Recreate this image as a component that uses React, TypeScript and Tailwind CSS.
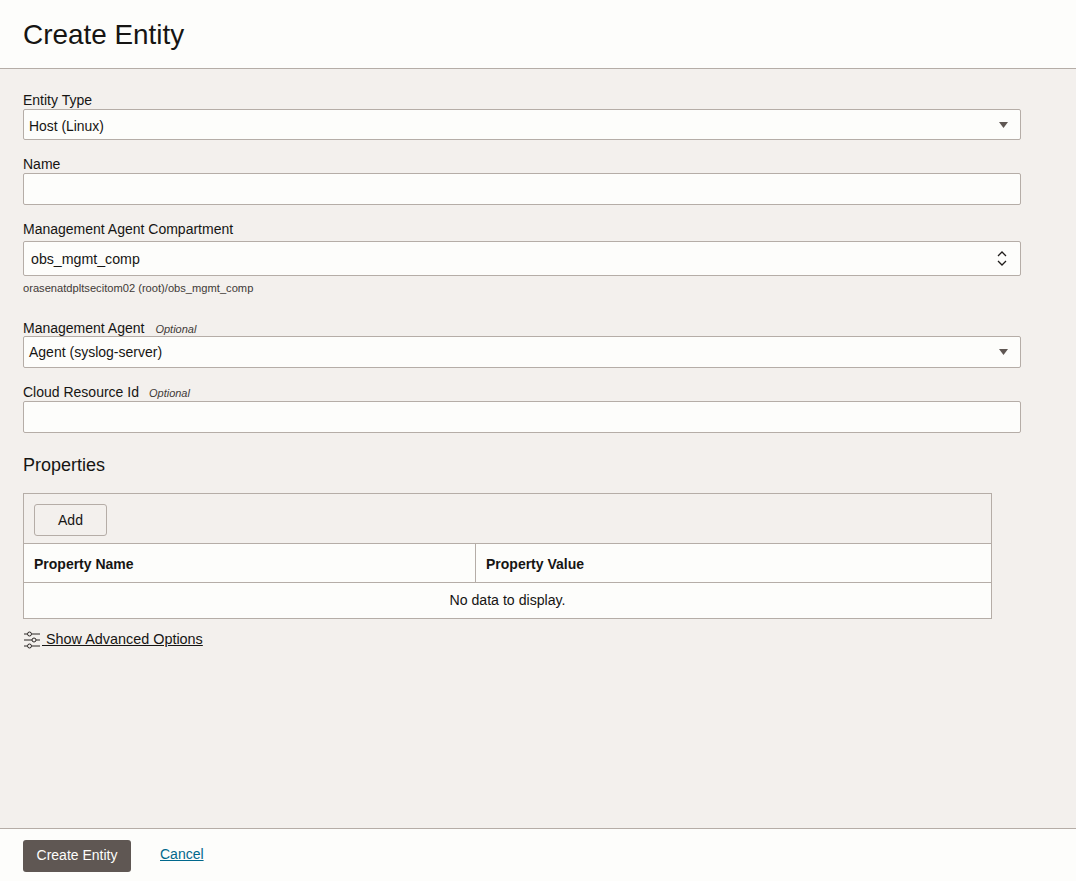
const ChevronDown = () => (
  <svg width="9" height="6" viewBox="0 0 9 6" className="shrink-0">
    <path d="M0 0h9L4.5 6z" fill="#5f5753" />
  </svg>
);

const UpDown = () => (
  <svg width="12" height="17" viewBox="0 0 12 17" fill="none" stroke="#1f1c1a" strokeWidth="1.3" className="shrink-0">
    <path d="M2 6l4-4 4 4" />
    <path d="M2 11l4 4 4-4" />
  </svg>
);

const SlidersIcon = () => (
  <svg width="18" height="18" viewBox="0 0 18 18" fill="none" stroke="#2b2725" strokeWidth="1" className="mr-[1px] shrink-0">
    <path d="M1 3h3M9 3h8M1 9h8M13 9h4M1 15h3M9 15h8" />
    <circle cx="6.5" cy="3" r="2" />
    <circle cx="11" cy="9" r="2" />
    <circle cx="6.5" cy="15" r="2" />
  </svg>
);

const App = () => {
  return (
    <div className="flex h-[881px] w-[1076px] flex-col overflow-hidden bg-[#f3f0ed] font-['Liberation_Sans',Arial,sans-serif] text-[14px] text-[#161513]">
      <header className="h-[69px] shrink-0 border-b border-[#b5ada7] bg-[#fdfdfb] pl-[23px] pt-[17px]">
        <h1 className="text-[27.9px] leading-[36px]">Create Entity</h1>
      </header>

      <main className="flex-1 px-[23px] pt-[23px]">
        <div className="w-[998px]">
          <label className="block h-[17px] leading-[17px]">Entity Type</label>
          <div className="flex h-[31px] items-center justify-between rounded-[2px] border border-[#b5ada7] bg-[#fdfdfb] pl-[5px] pr-[12px]">
            <span className="pt-[3px] text-[13.9px]">Host (Linux)</span>
            <ChevronDown />
          </div>

          <label className="mt-[16px] block h-[17px] leading-[17px]">Name</label>
          <input className="block h-[32px] w-full rounded-[2px] border border-[#b5ada7] bg-[#fdfdfb]" />

          <label className="mt-[16px] block h-[20px] leading-[17px]">Management Agent Compartment</label>
          <div className="flex h-[35px] items-center justify-between rounded-[2px] border border-[#b5ada7] bg-[#fdfdfb] pl-[7px] pr-[12px]">
            <span className="pt-[2px] text-[14.2px]">obs_mgmt_comp</span>
            <UpDown />
          </div>
          <p className="mt-[6px] h-[13px] text-[11.15px] leading-[13px] text-[#3f3a37]">orasenatdpltsecitom02 (root)/obs_mgmt_comp</p>

          <label className="mt-[25px] block h-[16px] leading-[16px]">
            Management Agent
            <span className="ml-[11px] text-[11px] italic text-[#3f3a37]">Optional</span>
          </label>
          <div className="flex h-[32px] items-center justify-between rounded-[2px] border border-[#b5ada7] bg-[#fdfdfb] pl-[5px] pr-[12px]">
            <span>Agent (syslog-server)</span>
            <ChevronDown />
          </div>

          <label className="mt-[16px] block h-[17px] leading-[17px]">
            Cloud Resource Id
            <span className="ml-[10px] text-[11px] italic text-[#3f3a37]">Optional</span>
          </label>
          <input className="block h-[32px] w-full rounded-[2px] border border-[#b5ada7] bg-[#fdfdfb]" />
        </div>

        <h2 className="mt-[21px] h-[22px] text-[18px] leading-[22px]">Properties</h2>

        <div className="mt-[17px] w-[969px] border border-[#b5ada7]">
          <div className="h-[50px] border-b border-[#b5ada7] pl-[10px] pt-[10px]">
            <button className="h-[32px] w-[73px] rounded-[3px] border border-[#b5ada7] text-[#161513]">Add</button>
          </div>
          <div className="flex h-[39px] border-b border-[#b5ada7] bg-[#fdfdfb] font-bold">
            <div className="flex w-[452px] items-center border-r border-[#b5ada7] pl-[10px] pt-[2px]">Property Name</div>
            <div className="flex flex-1 items-center pl-[10px] pt-[2px]">Property Value</div>
          </div>
          <div className="flex h-[35px] items-center justify-center bg-[#fdfdfb] text-[14.15px]">No data to display.</div>
        </div>

        <a className="mt-[10px] flex w-fit items-center text-[14.4px] underline" href="#">
          <SlidersIcon />
          <span className="whitespace-pre"> Show Advanced Options</span>
        </a>
      </main>

      <footer className="flex h-[53px] shrink-0 items-start border-t border-[#b5ada7] bg-[#fdfdfb] pl-[23px] pt-[11px]">
        <button className="h-[32px] w-[108px] rounded-[3px] bg-[#5f5753] pb-[2px] text-[#fdfdfb]">Create Entity</button>
        <a className="ml-[29px] mt-[6px] leading-[16px] text-[#00688c] underline" href="#">Cancel</a>
      </footer>
    </div>
  );
};

export default App;
